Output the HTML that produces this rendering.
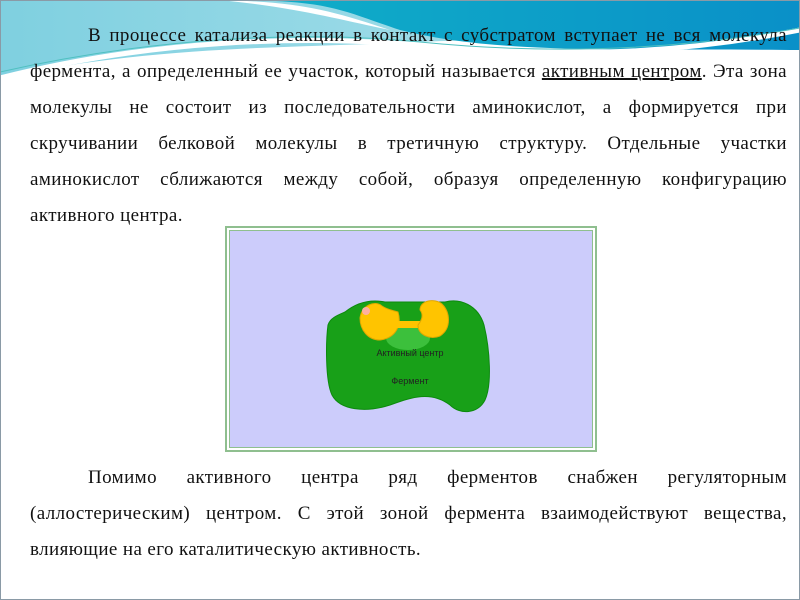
<!DOCTYPE html>
<html><head><meta charset="utf-8"><style>
html,body{margin:0;padding:0;}
body{width:800px;height:600px;position:relative;overflow:hidden;background:#fff;font-family:"Liberation Serif",serif;color:#111;}
.frame{position:absolute;left:0;top:0;width:798px;height:598px;border:1px solid #8a9aa6;}
.p{position:absolute;left:30px;width:757px;font-size:19px;letter-spacing:0.4px;line-height:36px;}
.p div{text-align:justify;text-align-last:justify;white-space:nowrap;height:36px;}
.p div.l{text-align-last:left;}
.ind{padding-left:58px;}
u{text-decoration-thickness:2px;}
.img{position:absolute;left:225px;top:226px;width:368px;height:222px;background:#ccccfb;border:2px solid #8fbf8f;box-shadow:inset 0 0 0 2px #fff,inset 0 0 0 3px #8fbf8f;}
</style></head><body>
<svg width="800" height="100" style="position:absolute;left:0;top:0">
<defs>
<linearGradient id="g1" x1="0" x2="1"><stop offset="0" stop-color="#7fd0e0"/><stop offset="0.6" stop-color="#9fdce8"/><stop offset="1" stop-color="#c8eef4"/></linearGradient>
<linearGradient id="g2" x1="0" x2="1"><stop offset="0" stop-color="#10b0c8"/><stop offset="1" stop-color="#0a90c8"/></linearGradient>
</defs>
<path d="M0 0 H800 V30 C650 40 500 38 420 42 C300 48 150 45 0 78 Z" fill="url(#g1)"/>
<path d="M230 0 C330 0 340 10 400 30 C500 55 620 48 800 50 V0 Z" fill="url(#g2)"/>
<path d="M220 0 C300 2 330 10 390 30 C340 20 300 8 220 0 Z" fill="#fff"/>
<path d="M0 78 C150 40 300 35 420 45 C520 55 650 60 800 30" fill="none" stroke="#fff" stroke-width="5"/>
<path d="M0 72 C150 38 300 30 420 42 C520 52 650 55 800 28" fill="none" stroke="#4fc0c0" stroke-width="1"/>
</svg>
<div class="frame"></div>
<div class="p" style="top:18px">
<div class="ind">В процессе катализа реакции в контакт с субстратом вступает не вся молекула</div>
<div>фермента, а определенный ее участок, который называется <u>активным центром</u>. Эта зона</div>
<div>молекулы не состоит из последовательности аминокислот, а формируется при</div>
<div>скручивании белковой молекулы в третичную структуру. Отдельные участки</div>
<div>аминокислот сближаются между собой, образуя определенную конфигурацию</div>
<div class="l">активного центра.</div>
</div>
<div class="img">
<svg width="368" height="222" style="position:absolute;left:0;top:0">
<g transform="translate(-227,-228)">
<path d="M345 312 C360 300 375 300 385 302 L445 302 C460 298 478 305 484 325 C490 350 492 385 485 400 C478 414 460 415 450 405 C430 390 410 398 390 405 C365 413 340 410 332 395 C325 380 326 340 328 325 C330 318 338 315 345 312 Z" fill="#18a018" stroke="#0c8a0c" stroke-width="1"/>
<ellipse cx="408" cy="338" rx="22" ry="12" fill="#3cc03c"/>
<path d="M360 318 C362 305 375 300 382 306 C388 310 392 310 398 312 C402 325 396 338 380 340 C368 340 360 330 360 318 Z" fill="#ffc400" stroke="#e0a800"/>
<circle cx="366" cy="311" r="4" fill="#ffb0a0"/>
<rect x="394" y="321" width="30" height="7" fill="#ffc400"/>
<path d="M420 310 C420 300 435 298 442 304 C450 312 452 328 440 336 C430 340 418 335 418 325 C422 320 424 315 420 310 Z" fill="#ffc400" stroke="#e0a800"/>
<text x="410" y="356" font-family="Liberation Sans,sans-serif" font-size="9" fill="#222" text-anchor="middle">Активный центр</text>
<text x="410" y="384" font-family="Liberation Sans,sans-serif" font-size="9" fill="#222" text-anchor="middle">Фермент</text>
</g></svg>
</div>
<div class="p" style="top:460px">
<div class="ind">Помимо активного центра ряд ферментов снабжен регуляторным</div>
<div>(аллостерическим) центром. С этой зоной фермента взаимодействуют вещества,</div>
<div class="l">влияющие на его каталитическую активность.</div>
</div>
</body></html>
